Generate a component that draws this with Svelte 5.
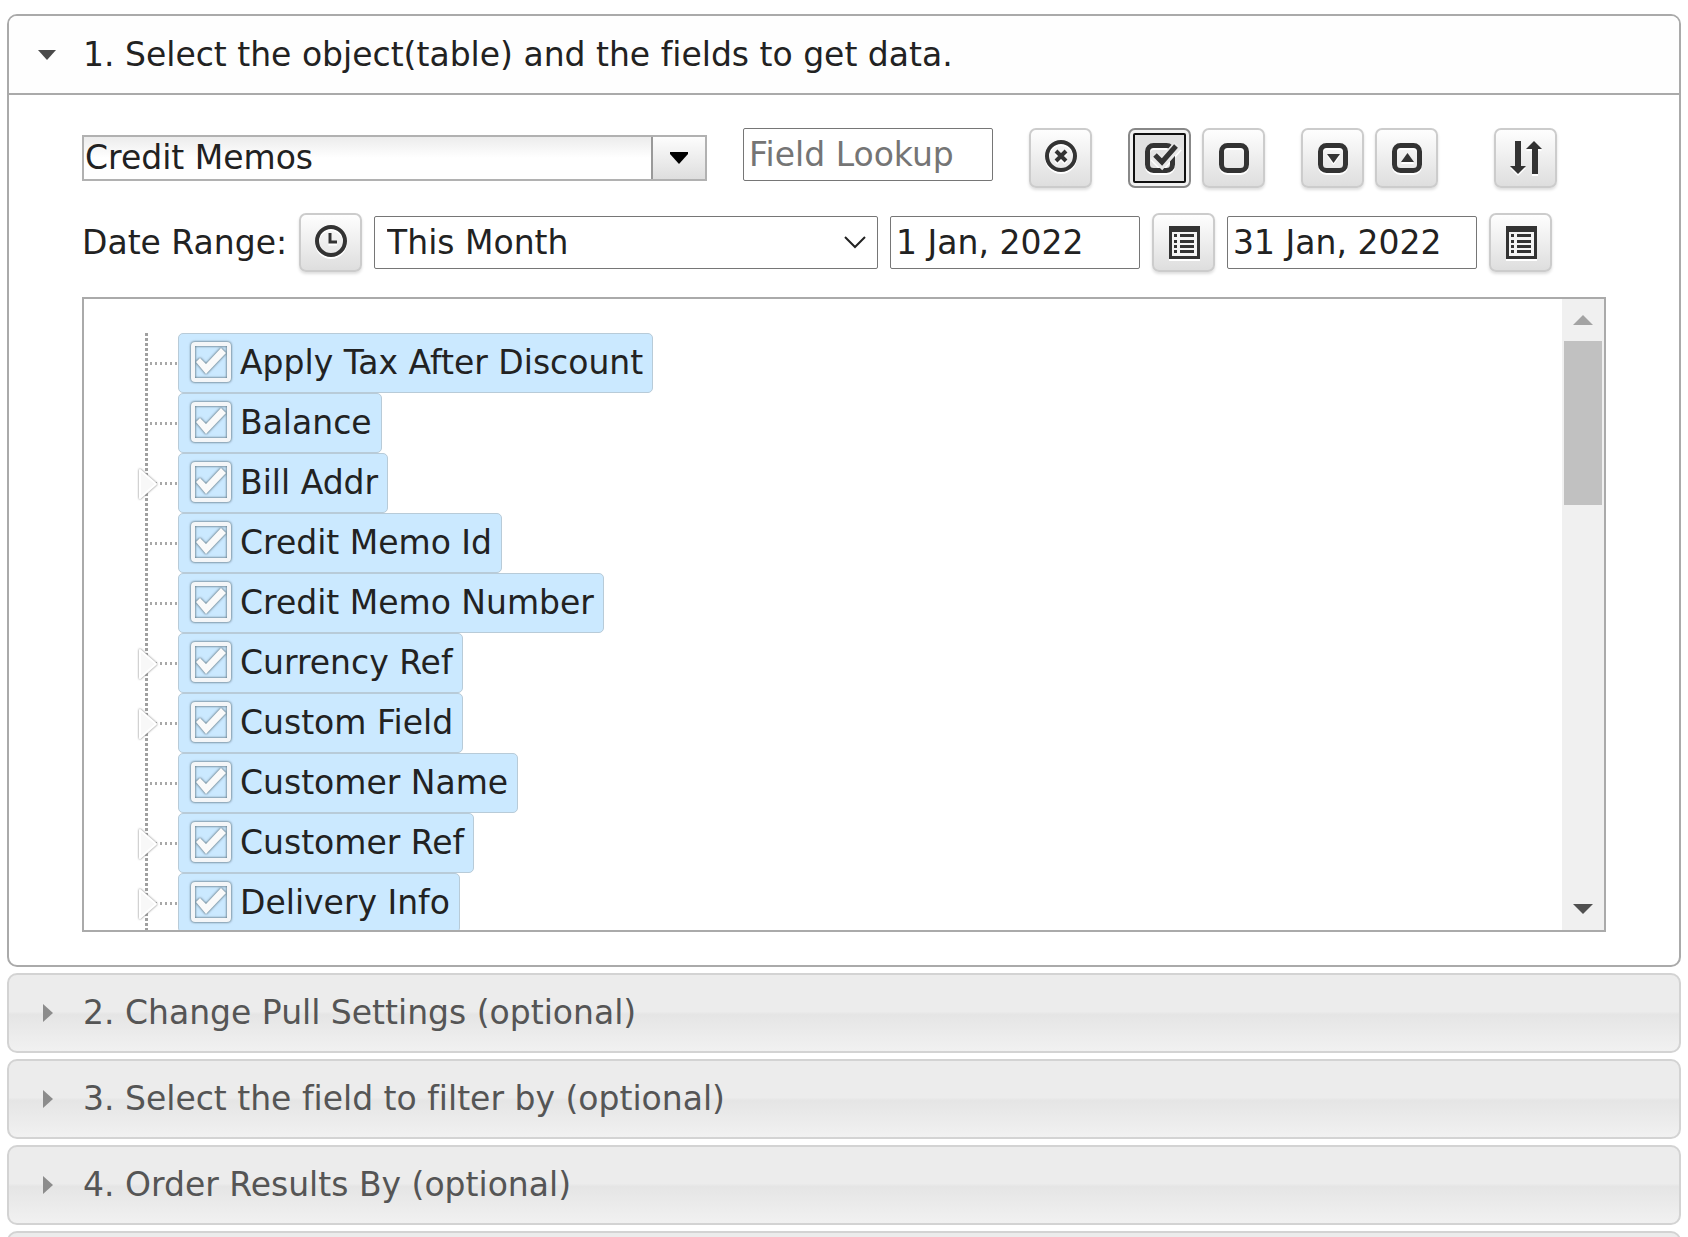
<script>
  let fields = $state([
    { name: 'Apply Tax After Discount', nested: false, checked: true },
    { name: 'Balance', nested: false, checked: true },
    { name: 'Bill Addr', nested: true, checked: true },
    { name: 'Credit Memo Id', nested: false, checked: true },
    { name: 'Credit Memo Number', nested: false, checked: true },
    { name: 'Currency Ref', nested: true, checked: true },
    { name: 'Custom Field', nested: true, checked: true },
    { name: 'Customer Name', nested: false, checked: true },
    { name: 'Customer Ref', nested: true, checked: true },
    { name: 'Delivery Info', nested: true, checked: true }
  ]);
  const steps = [
    '2. Change Pull Settings (optional)',
    '3. Select the field to filter by (optional)',
    '4. Order Results By (optional)'
  ];
  let table = $state('Credit Memos');
  let lookup = $state('');
  let from = $state('1 Jan, 2022');
  let to = $state('31 Jan, 2022');

  function setAll(value) {
    for (const f of fields) f.checked = value;
  }
</script>

{#snippet frame()}
  <rect x="3.5" y="3.5" width="25" height="25" rx="6" fill="none" stroke="#333" stroke-width="5" />
{/snippet}

{#snippet calendarIcon()}
  <svg class="icon" viewBox="0 0 32 34" aria-hidden="true">
    <path d="M1 0h31v33H1z" fill="#333" />
    <path d="M4 6h25v24H4z" fill="#f4f4f4" />
    <path d="M6 8h3v3H6zM6 14h3v3H6zM6 19h3v3H6zM6 24h3v3H6zM12 8h14v3H12zM12 14h14v3H12zM12 19h14v3H12zM12 24h14v3H12z" fill="#333" />
  </svg>
{/snippet}

<main>
  <section class="panel">
    <h2>
      <button class="head open" aria-expanded="true">
        <svg class="caret" viewBox="0 0 20 20" aria-hidden="true"><path d="M1 5h18l-9 10z" fill="#4a4a4a" /></svg>
        <span>1. Select the object(table) and the fields to get data.</span>
      </button>
    </h2>
    <div class="body">
      <div class="row">
        <div class="combo">
          <input type="text" aria-label="Object" bind:value={table} />
          <button aria-label="Show objects">
            <svg viewBox="0 0 18 12" aria-hidden="true"><path d="M0 0h18v2l-9 10-9-10z" fill="#000" /></svg>
          </button>
        </div>
        <input class="box lookup" type="text" aria-label="Field Lookup" placeholder="Field Lookup" bind:value={lookup} />
        <button class="tool" aria-label="Clear lookup" onclick={() => (lookup = '')}>
          <svg class="icon" viewBox="0 0 32 34" aria-hidden="true">
            <circle cx="16" cy="15" r="14" fill="none" stroke="#333" stroke-width="4" />
            <path d="M11 10l10 10M21 10l-10 10" stroke="#333" stroke-width="4" />
          </svg>
        </button>
        <div class="pair">
          <button class="tool pressed" aria-label="Check all" onclick={() => setAll(true)}>
            <svg class="icon" viewBox="0 0 32 32" aria-hidden="true">
              {@render frame()}
              <path d="M10 13l8 8L34 3" fill="none" stroke="#e8e8e8" stroke-width="10" />
              <path d="M11 13l7 7L32 4" fill="none" stroke="#333" stroke-width="5" />
            </svg>
          </button>
          <button class="tool" aria-label="Uncheck all" onclick={() => setAll(false)}>
            <svg class="icon" viewBox="0 0 32 32" aria-hidden="true">{@render frame()}</svg>
          </button>
        </div>
        <div class="pair">
          <button class="tool" aria-label="Expand all">
            <svg class="icon" viewBox="0 0 32 32" aria-hidden="true">
              {@render frame()}
              <path d="M10 12h13l-6.500 9z" fill="#333" />
            </svg>
          </button>
          <button class="tool" aria-label="Collapse all">
            <svg class="icon" viewBox="0 0 32 32" aria-hidden="true">
              {@render frame()}
              <path d="M10 20h13l-6.500-9z" fill="#333" />
            </svg>
          </button>
        </div>
        <button class="tool sort" aria-label="Sort">
          <svg class="icon" viewBox="0 0 32 34" aria-hidden="true">
            <path d="M5 0h6v25h5l-8 8-8-8h5zM22 33V8h-6l8-8 8 8h-4v25z" fill="#333" />
          </svg>
        </button>
      </div>

      <div class="row dates">
        <label for="range">Date Range:</label>
        <button class="tool" aria-label="Date presets">
          <svg class="icon" viewBox="0 0 32 34" aria-hidden="true">
            <circle cx="16" cy="15" r="14" fill="none" stroke="#333" stroke-width="4" />
            <path d="M15 7v9h7" fill="none" stroke="#333" stroke-width="3" />
          </svg>
        </button>
        <div class="select">
          <select id="range" class="box"><option>This Month</option></select>
          <svg viewBox="0 0 22 12" aria-hidden="true"><path d="M1 1l10 10L21 1" fill="none" stroke="#222" stroke-width="2" /></svg>
        </div>
        <input class="box" type="text" aria-label="From date" bind:value={from} />
        <button class="tool" aria-label="Pick from date">{@render calendarIcon()}</button>
        <input class="box" type="text" aria-label="To date" bind:value={to} />
        <button class="tool" aria-label="Pick to date">{@render calendarIcon()}</button>
      </div>

      <div class="tree">
        <ul>
          {#each fields as field}
            <li>
              <span class="branch">
                {#if field.nested}
                  <button class="expander" aria-label="Expand {field.name}">
                    <svg viewBox="0 0 22 34" aria-hidden="true">
                      <path d="M2 3l16 14L2 31z" fill="#f8f8f8" stroke="#fff" stroke-width="2" stroke-linejoin="round" />
                    </svg>
                  </button>
                {/if}
              </span>
              <label class="node" class:on={field.checked}>
                <input type="checkbox" bind:checked={field.checked} />
                <svg viewBox="0 0 42 42" aria-hidden="true">
                  <rect x="3" y="3" width="36" height="36" rx="2" fill="none" stroke="#f4f6f8" stroke-width="4" />
                  {#if field.checked}
                    <path d="M6 21l4-4 6 6L31 7l5 5-20 21z" fill="#fafafa" />
                  {/if}
                </svg>
                <span>{field.name}</span>
              </label>
            </li>
          {/each}
        </ul>
        <div class="scroll">
          <button aria-label="Scroll up"><svg viewBox="0 0 20 10" aria-hidden="true"><path d="M0 10h20L10 0z" fill="#a3a3a3" /></svg></button>
          <div class="track"><div class="thumb"></div></div>
          <button aria-label="Scroll down"><svg viewBox="0 0 20 10" aria-hidden="true"><path d="M0 0h20L10 10z" fill="#505050" /></svg></button>
        </div>
      </div>
    </div>
  </section>

  {#each steps as step}
    <h2>
      <button class="head closed" aria-expanded="false">
        <svg class="caret" viewBox="0 0 20 20" aria-hidden="true"><path d="M6 1v18l10-9z" fill="#8c8c8c" /></svg>
        <span>{step}</span>
      </button>
    </h2>
  {/each}
  <div class="head closed"></div>
</main>

<style>
  :global(body) {
    margin: 0;
    background: #fff;
  }
  main {
    box-sizing: border-box;
    height: 100vh;
    overflow: hidden;
    padding: 14px 7px 0;
    display: flex;
    flex-direction: column;
    gap: 6px;
    font: 33px/40px Verdana, "DejaVu Sans", sans-serif;
    font-variant-ligatures: none;
    color: #222;
  }
  main > * {
    flex-shrink: 0;
  }
  button,
  input,
  select {
    font: inherit;
    font-variant-ligatures: none;
    color: inherit;
    box-sizing: border-box;
    margin: 0;
  }
  button {
    padding: 0;
    cursor: pointer;
  }
  svg {
    display: block;
    overflow: visible;
  }
  h2 {
    margin: 0;
    font: inherit;
  }
  .panel {
    border: 2px solid #aaa;
    border-radius: 10px;
  }
  .head {
    display: flex;
    align-items: center;
    gap: 26px;
    width: 100%;
    box-sizing: border-box;
    min-height: 80px;
    padding: 0 28px;
    text-align: left;
  }
  .open {
    min-height: 79px;
    border: 0;
    border-bottom: 2px solid #aaa;
    border-radius: 8px 8px 0 0;
    background: #fefefe;
  }
  .closed {
    border: 2px solid #d3d3d3;
    border-radius: 10px;
    color: #555;
    background: linear-gradient(#ececec 0 48%, #e5e5e5 52%, #f1f1f1);
  }
  .caret {
    width: 20px;
    height: 20px;
    flex: none;
  }
  .body {
    display: flex;
    flex-direction: column;
    gap: 25px;
    padding: 33px 73px;
  }
  .row {
    display: flex;
    flex-wrap: wrap;
    align-items: center;
    gap: 36px;
  }
  .dates {
    gap: 12px;
  }
  .combo {
    display: flex;
    width: 625px;
    height: 46px;
    box-sizing: border-box;
    border: 2px solid #b1b1b1;
  }
  .combo input {
    flex: 1;
    min-width: 0;
    border: 0;
    padding: 0 1px;
    background: linear-gradient(#ececec, #fff 50%);
  }
  .combo button {
    display: grid;
    place-items: center;
    width: 54px;
    border: 0;
    border-left: 2px solid #999;
    background: linear-gradient(#fdfdfd, #dedede);
  }
  .combo svg {
    width: 18px;
    height: 12px;
  }
  .box {
    width: 250px;
    height: 53px;
    border: 1px solid #767676;
    border-radius: 2px;
    padding: 0 5px;
    background: #fff;
  }
  .lookup {
    align-self: flex-start;
  }
  .box::placeholder {
    color: #757575;
    opacity: 1;
  }
  .tool {
    display: grid;
    place-items: center;
    width: 63px;
    height: 60px;
    border: 2px solid #ccc;
    border-radius: 7px;
    background: linear-gradient(#fefefe, #dedede);
    box-shadow: 0 2px 3px #0002;
  }
  .dates .tool {
    height: 59px;
  }
  .icon {
    width: 32px;
    height: 34px;
    filter: drop-shadow(0 2px 0 #fff);
  }
  .pressed {
    border-color: #888;
    background: #e2e2e2;
    outline: 2px solid #111;
    outline-offset: -7px;
    box-shadow: inset 0 0 0 3px #f2f2f2;
  }
  .pair {
    display: flex;
    gap: 11px;
  }
  .sort {
    margin-left: 20px;
  }
  .select {
    position: relative;
    width: 504px;
  }
  .select .box {
    display: block;
    width: 100%;
    padding: 0 12px;
    appearance: none;
  }
  .select svg {
    position: absolute;
    right: 12px;
    top: 20px;
    width: 22px;
    height: 12px;
    pointer-events: none;
  }
  .tree {
    display: flex;
    height: 635px;
    box-sizing: border-box;
    border: 2px solid #aaa;
  }
  ul {
    flex: 1;
    margin: 0;
    padding: 34px 0 0 54px;
    list-style: none;
    overflow-y: auto;
    scrollbar-width: none;
  }
  li {
    display: flex;
    height: 60px;
  }
  .branch {
    position: relative;
    width: 40px;
    background:
      repeating-linear-gradient(#a0a0a0 0 3px, transparent 3px 5px) 7px 0 / 3px 100% no-repeat,
      repeating-linear-gradient(90deg, #a8a8a8 0 2px, transparent 2px 5px) 12px 29px / 28px 3px no-repeat;
  }
  .expander {
    position: absolute;
    left: 0;
    top: 14px;
    border: 0;
    background: none;
  }
  .expander svg {
    width: 22px;
    height: 34px;
    filter: drop-shadow(0 0 1px #777);
  }
  .node {
    display: flex;
    align-items: center;
    gap: 8px;
    box-sizing: border-box;
    border: 1px solid transparent;
    border-radius: 5px;
    padding: 0 9px 0 11px;
    white-space: nowrap;
  }
  .on {
    background: #cbe9ff;
    border-color: #b8cbd8;
  }
  .node input {
    position: absolute;
    opacity: 0;
  }
  .node svg {
    width: 42px;
    height: 42px;
    margin-bottom: 3px;
    filter: drop-shadow(0 0 1px #5f7887) drop-shadow(0 0 1px #8fa6b4);
  }
  .scroll {
    display: flex;
    flex-direction: column;
    width: 42px;
    background: #f0f0f0;
  }
  .scroll button {
    display: grid;
    place-items: center;
    height: 42px;
    border: 0;
    background: none;
  }
  .scroll svg {
    width: 20px;
    height: 10px;
  }
  .track {
    flex: 1;
    padding: 0 2px;
  }
  .thumb {
    height: 30%;
    background: #c1c1c1;
  }
</style>
